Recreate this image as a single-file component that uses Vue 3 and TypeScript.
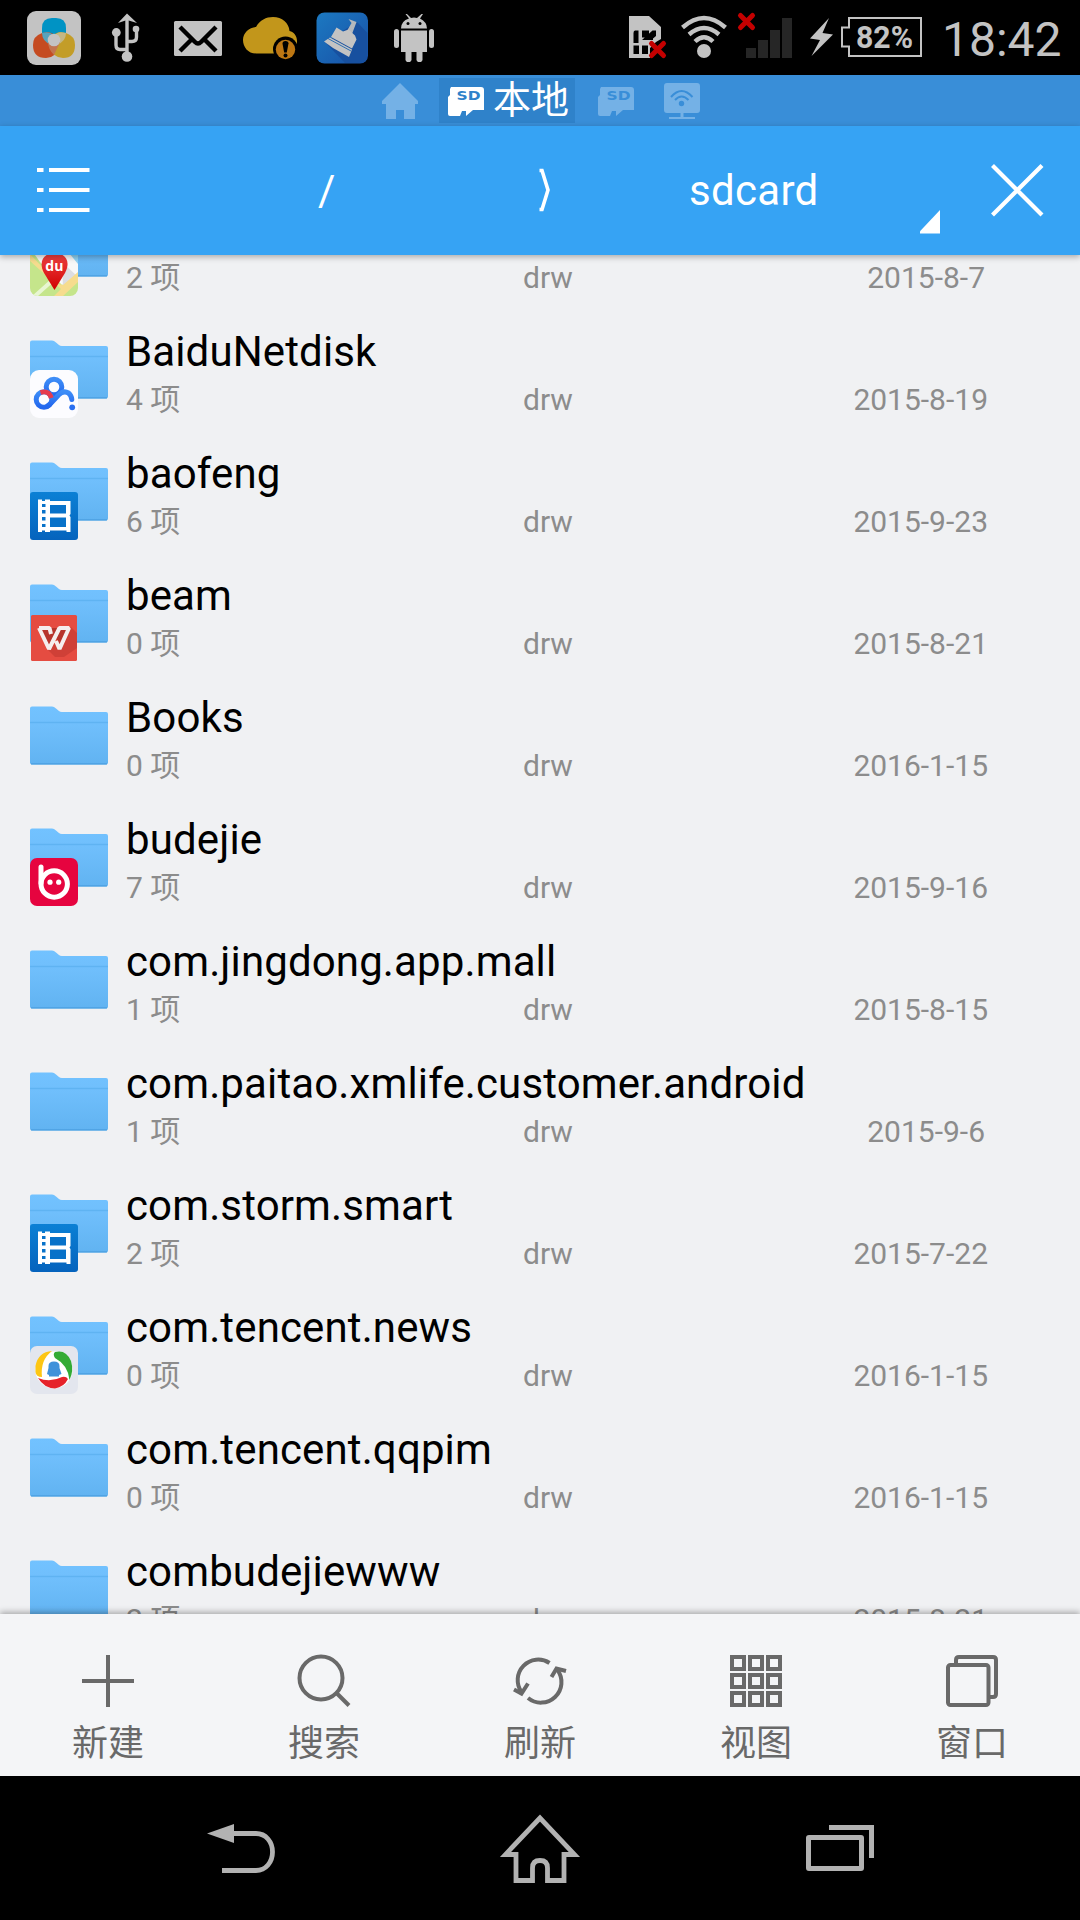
<script setup lang="ts">
type AppIcon = 'map' | 'disk' | 'film' | 'wps' | 'bude' | 'news'

interface Entry {
  name: string
  count: number
  date: string
  icon?: AppIcon
}

interface Tool {
  id: string
  label: string
}

const entries: Entry[] = [
  { name: '', count: 2, date: '2015-8-7', icon: 'map' },
  { name: 'BaiduNetdisk', count: 4, date: '2015-8-19', icon: 'disk' },
  { name: 'baofeng', count: 6, date: '2015-9-23', icon: 'film' },
  { name: 'beam', count: 0, date: '2015-8-21', icon: 'wps' },
  { name: 'Books', count: 0, date: '2016-1-15' },
  { name: 'budejie', count: 7, date: '2015-9-16', icon: 'bude' },
  { name: 'com.jingdong.app.mall', count: 1, date: '2015-8-15' },
  { name: 'com.paitao.xmlife.customer.android', count: 1, date: '2015-9-6' },
  { name: 'com.storm.smart', count: 2, date: '2015-7-22', icon: 'film' },
  { name: 'com.tencent.news', count: 0, date: '2016-1-15', icon: 'news' },
  { name: 'com.tencent.qqpim', count: 0, date: '2016-1-15' },
  { name: 'combudejiewww', count: 2, date: '2015-8-21' },
]

const tools: Tool[] = [
  { id: 'new', label: '新建' },
  { id: 'search', label: '搜索' },
  { id: 'refresh', label: '刷新' },
  { id: 'view', label: '视图' },
  { id: 'window', label: '窗口' },
]

const cells = [0, 1, 2, 3, 4, 5, 6, 7, 8]
</script>

<template>
  <div class="screen">
    <header class="status">
      <svg class="first" width="75" height="75" viewBox="20 0 75 75">
        <rect x="27" y="11" width="54" height="54" rx="9" fill="#c3c3c3" />
        <path d="M42 28q0-10 10-10h4q10 0 10 10v4q0 10-10 10h-4q-10 0-10-10z" fill="#0093c4" />
        <path d="M42 33q-9 3-9 12q0 13 13 13q10 0 13-12q0-12-11-14z" fill="#c54b21" />
        <path d="M66 33q9 3 9 12q0 13-12 13q-10 0-14-12q0-12 11-14z" fill="#c39d28" />
        <path d="M42 33q12-3 12 7l-3 5q-9-4-9-12z" fill="#57a3bd" />
        <path d="M66 33q-12-3-12 7l3 5q9-4 9-12z" fill="#c4b784" />
        <path d="M48 42h12l-6 13q-6-6-6-13z" fill="#c27450" />
        <circle cx="54" cy="40" r="6.3" fill="#c3c3c3" />
      </svg>
      <svg width="60" height="75" viewBox="95 0 60 75" fill="none" stroke="#c3c3c3" stroke-width="3.400">
        <path d="M127 56V20M127 49.500H120Q116 49.500 116 45V33M127 41.500H132Q136.500 41.500 136.500 37V29" />
        <path d="M127 13.500L137 23L127 20L118 23z" fill="#c3c3c3" stroke="none" />
        <g fill="#c3c3c3" stroke="none">
          <circle cx="127" cy="56.500" r="5.300" />
          <circle cx="116.300" cy="32.500" r="4.400" />
          <circle cx="136" cy="29" r="3.300" />
        </g>
      </svg>
      <svg width="80" height="75" viewBox="155 0 80 75">
        <rect x="174" y="21" width="48" height="35" rx="1.500" fill="#c3c3c3" />
        <path d="M180 27L195 42Q198 45 201 42L216 27M180 51L191 40M216 51L205 40" fill="none" stroke="#000" stroke-width="4.400" />
      </svg>
      <svg width="70" height="75" viewBox="235 0 70 75">
        <path d="M256 53.500C248 53.500 243 47 243 40C243 33 249 27.500 256 27C260 20 266 17 273 17C282 17 289 23 289.500 31C294 32 297 36 297 41V53.500z" fill="#c2961b" />
        <circle cx="285.500" cy="49" r="12.500" fill="#000" />
        <circle cx="285.500" cy="49.500" r="9.700" fill="#bd7713" />
        <path d="M282.500 43.500q0-2.500 3-2.500t3 2.500l-1.700 9h-2.600z" fill="#000" />
        <circle cx="285.500" cy="55.500" r="2" fill="#000" />
      </svg>
      <svg width="75" height="75" viewBox="305 0 75 75">
        <defs>
          <linearGradient id="brush" x1="0" y1="0" x2="1" y2="1">
            <stop offset="0" stop-color="#1c79c1" />
            <stop offset="1" stop-color="#1850a6" />
          </linearGradient>
        </defs>
        <rect x="316.500" y="12.500" width="51.500" height="51" rx="8" fill="url(#brush)" />
        <path d="M357 22L367.500 33V55Q367 63 360 63H345L325 42z" fill="#17509f" />
        <path d="M347.500 30L351.500 23L348.500 19L356.500 22L352 34z" fill="#b4b8bd" />
        <path d="M336.500 27.500L343 31.500L348.500 29.500L355 35.500L356.500 39.500L352 48.500L331 37z" fill="#c3c3c3" />
        <path d="M330 37.500L352 49.500L349 57L341 52.500L333 48L324 41.500z" fill="#c3c3c3" />
        <path d="M328 38.500L351 51" stroke="#1b65b1" stroke-width="0.900" />
      </svg>
      <svg width="65" height="75" viewBox="380 0 65 75" fill="#c3c3c3">
        <path d="M401 28.500Q401 21 409 18.500L405.500 14H407L411 18Q414 17 417 18L421.500 14H423L420 18.500Q427 22 427 28.500z" />
        <path d="M401 30.500H427V52H401z" />
        <rect x="394" y="29" width="5" height="19" rx="2.500" />
        <rect x="429" y="29" width="5" height="19" rx="2.500" />
        <rect x="405.500" y="45" width="6" height="17" rx="2.800" />
        <rect x="416.500" y="45" width="6" height="17" rx="2.800" />
        <circle cx="408" cy="23.500" r="1.500" fill="#000" />
        <circle cx="420" cy="23.500" r="1.500" fill="#000" />
      </svg>
      <span class="grow"></span>
      <svg width="55" height="75" viewBox="615 0 55 75">
        <path d="M629 16H649L661 27V39L656 42L650 48V58H629z" fill="#c3c3c3" />
        <path d="M638.500 30.500H635Q633.500 30.500 633.500 33V43H638.500zM642 30.500H649V37.500H642zM652.500 30.500H656V36L653 38.500V40H642M633.500 45.500H639V54H633.500zM642 45.500H648V54H642z" fill="#000" />
        <path d="M651.500 43.500L663.500 55.500M663.500 43.500L651.500 55.500" stroke="#c40000" stroke-width="5" stroke-linecap="round" />
      </svg>
      <svg width="62" height="75" viewBox="670 0 62 75" fill="none" stroke="#c3c3c3" stroke-width="4.400">
        <path d="M682.500 27.500Q704 8.500 725.500 27.500M689 34.500Q704 21.500 719 34.500M695 41.500Q704 33 713 41.500" />
        <circle cx="704" cy="51" r="7" fill="#c3c3c3" stroke="none" />
      </svg>
      <svg width="68" height="75" viewBox="732 0 68 75" fill="#262626">
        <path d="M746 48h10v10h-10zM758 40h10v18h-10zM770 30h10v28h-10zM782 18h10v40h-10z" />
        <path d="M740.500 15.500L752.500 27.500M752.500 15.500L740.500 27.500" stroke="#c40000" stroke-width="5" stroke-linecap="round" />
      </svg>
      <svg width="38" height="75" viewBox="800 0 38 75">
        <path d="M829 18L810 38.500L820 40L811.500 56L833 34.500L822.500 33z" fill="#c3c3c3" />
      </svg>
      <svg width="87" height="75" viewBox="838 0 87 75">
        <path d="M849 18H921V56H849V46.500H842V27.500H849z" fill="none" stroke="#c3c3c3" stroke-width="2" />
        <text x="856" y="48" textLength="57" lengthAdjust="spacingAndGlyphs" class="pct">82%</text>
      </svg>
      <span class="clock">18:42</span>
    </header>

    <nav class="tabs">
      <svg width="36" height="36" viewBox="0 0 36 36" fill="#74b1e6">
        <path d="M18 0L36 18V21H33V36H22V27H14V36H4V21H0V18z" />
      </svg>
      <div class="tab-on">
        <svg width="37" height="29" viewBox="0 0 37 29">
          <path d="M3 0H33Q36 0 36 3V23H25L18 29V24H14L12 29H2Q0 29 0 27V10L2 8V2z" fill="#fff" />
          <text x="8.500" y="12.500" textLength="24" lengthAdjust="spacingAndGlyphs" class="sd-text on">SD</text>
        </svg>
        <span>本地</span>
      </div>
      <svg class="sd" width="37" height="29" viewBox="0 0 37 29">
        <path d="M3 0H33Q36 0 36 3V23H25L18 29V24H14L12 29H2Q0 29 0 27V10L2 8V2z" fill="#74b1e6" />
        <text x="8.500" y="12.500" textLength="24" lengthAdjust="spacingAndGlyphs" class="sd-text">SD</text>
      </svg>
      <svg class="net" width="36" height="36" viewBox="0 0 36 36">
        <path d="M3 0H33Q36 0 36 3V27Q36 30 33 30H19.500V34H31V36H5V34H16.500V30H3Q0 30 0 27V3Q0 0 3 0z" fill="#74b1e6" />
        <path d="M7 14Q17.500 2 28.500 14M11 17Q17.500 10 24.500 17" fill="none" stroke="#398ed8" stroke-width="2" />
        <circle cx="17.500" cy="20.500" r="2.700" fill="#398ed8" />
      </svg>
    </nav>

    <div class="crumbs">
      <svg width="140" height="129" viewBox="0 126 140 129" stroke="#fff" stroke-width="4">
        <path d="M37 170h6.500M49 170h40.500M37 190h6.500M49 190h40.500M37 210h6.500M49 210h40.500" />
      </svg>
      <span class="root">/</span>
      <svg width="20" height="129" viewBox="535 126 20 129" fill="none" stroke="#fff" stroke-width="3.600">
        <path d="M539.500 170.500H542L548 190L542 209.500H539.500" />
      </svg>
      <span class="folder-name">sdcard</span>
      <svg width="160" height="129" viewBox="920 126 160 129">
        <path d="M940 210V233.500H918z" fill="#fff" />
        <path d="M992.500 165.500L1042 215M1042 165.500L992.500 215" stroke="#fff" stroke-width="4.200" />
      </svg>
    </div>

    <main class="list">
      <article v-for="(e, i) in entries" :key="i" class="row">
        <div class="thumb">
          <svg width="78" height="59" viewBox="0 0 78 59">
            <defs>
              <linearGradient id="folder" x1="0" y1="0" x2="0" y2="1">
                <stop offset="0" stop-color="#72c2ff" />
                <stop offset="0.3" stop-color="#70bffc" />
                <stop offset="1" stop-color="#61b3f1" />
              </linearGradient>
            </defs>
            <path d="M2 0.500H22Q24 0.500 26 2.500L29 5Q30 6 32 6H76Q78 6 78 8V56.500Q78 58.500 76 58.500H2Q0 58.500 0 56.500V2.500Q0 0.500 2 0.500z" fill="url(#folder)" />
            <path d="M0 16.500H78" stroke="#5fb3f2" stroke-width="1.600" />
            <path d="M1 57.800H77" stroke="#4b9fe0" stroke-width="1.300" />
          </svg>
          <svg v-if="e.icon" class="badge" width="48" height="48" viewBox="0 0 48 48">
            <defs>
              <linearGradient id="blue" x1="0" y1="0" x2="0" y2="1">
                <stop offset="0" stop-color="#0b80d5" />
                <stop offset="1" stop-color="#0563bd" />
              </linearGradient>
              <linearGradient id="pan" x1="0" y1="0" x2="0" y2="1">
                <stop offset="0" stop-color="#3d8df7" />
                <stop offset="1" stop-color="#2468ee" />
              </linearGradient>
              <linearGradient id="pin" x1="0" y1="0" x2="0" y2="1">
                <stop offset="0" stop-color="#f04343" />
                <stop offset="1" stop-color="#d00000" />
              </linearGradient>
              <clipPath id="tile"><rect width="48" height="48" rx="8" /></clipPath>
            </defs>
            <g v-if="e.icon === 'map'" clip-path="url(#tile)">
              <rect width="48" height="48" fill="#c5e58b" />
              <path d="M0 0H48V27L32 37L10 14z" fill="#f8f8f8" />
              <path d="M32 14L48 29L33 40z" fill="#dcdde2" />
              <path d="M35 0H48V16z" fill="#8fd3f5" />
              <path d="M0 6L28 36L33 37L48 24V34L33 48H24L31 41L0 13z" fill="#f6dc8e" />
              <path d="M5 48L24 31" stroke="#e8f6d2" stroke-width="4" />
              <path d="M24.500 42L14 25C8 13 14 5 24.500 5C36 5 41 14 35 25z" fill="url(#pin)" />
              <text x="24.300" y="23" class="du">du</text>
            </g>
            <g v-else-if="e.icon === 'disk'">
              <rect width="48" height="48" rx="9" fill="#fcfcff" />
              <g fill="none" stroke="url(#pan)" stroke-width="5">
                <circle cx="24" cy="17" r="7.800" />
                <circle cx="14" cy="29.500" r="7.800" />
                <path d="M17.500 36Q20 34.500 28.500 25Q33.500 20 38.500 23Q41.500 25.500 41.800 29.500" stroke-linecap="round" />
              </g>
              <path d="M10.500 22.500Q19 20 21.300 28" fill="none" stroke="#e63b4e" stroke-width="4.800" />
              <circle cx="42.200" cy="37.300" r="2.900" fill="#2a70f0" />
            </g>
            <g v-else-if="e.icon === 'film'">
              <rect width="48" height="48" rx="3" fill="url(#blue)" />
              <path d="M8 7.500H12V9H15V7.500H20V9H40.500V22L39.500 23.500L40.500 25V40H36.500V38.500H20V40H15V38.500H12V40H8z" fill="#fff" />
              <path d="M12 12h3.500v3H12zM12 18h3.500v3.500H12zM12 25h3.500v3.500H12zM12 32h3.500v3H12zM20 13H36V21.500H20zM20 25.500H36V35H20z" fill="#0872c9" />
            </g>
            <g v-else-if="e.icon === 'wps'">
              <rect x="1" y="1" width="46" height="46" rx="1.500" fill="#e54c41" />
              <path d="M41 13L47 19V34L34 43H25L18 36z" fill="#cf4037" />
              <path d="M9 14L19 35L26 23L29 35L39 14z" fill="#b7342c" />
              <path d="M9 14H19.500L21 20M9 14L19 35L29.500 14H39L29.500 35L26 27" fill="none" stroke="#f5eeee" stroke-width="4" stroke-linejoin="bevel" />
            </g>
            <g v-else-if="e.icon === 'bude'">
              <rect width="48" height="48" rx="7" fill="#e6043f" />
              <path d="M11 9V25" stroke="#fff" stroke-width="5" stroke-linecap="round" />
              <circle cx="24.200" cy="26" r="13.200" fill="none" stroke="#fff" stroke-width="5" />
              <circle cx="20" cy="24.200" r="2.600" fill="#fff" />
              <circle cx="28.700" cy="24.200" r="2.600" fill="#fff" />
            </g>
            <g v-else>
              <rect width="48" height="48" rx="7" fill="#e3e6ee" />
              <circle cx="24" cy="24" r="18.500" fill="#fff" />
              <path d="M22 5Q8 6 5.500 20V26Q6 31 12 31Q10 14 22 5z" fill="#fdc615" />
              <path d="M25 6Q36 3 41 15Q44 25 39.500 34Q38 19 25 12Q22.500 8 25 6z" fill="#33ab35" />
              <path d="M8 32Q20 37 32 31Q36 30 38 33Q34 41 25 42.500Q14 42 8 32z" fill="#e6222a" />
              <path d="M18.500 20Q18.500 15.500 24 15.500Q29.500 15.500 29.500 20V22L31.500 28L29 29V30.500H19V29L17 28L18.500 22z" fill="#3f92da" />
            </g>
          </svg>
        </div>
        <div class="body">
          <div class="name">{{ e.name }}</div>
          <div class="meta">
            <span class="count">{{ e.count }} 项</span>
            <span class="perm">drw</span>
            <span class="date" :class="{ short: e.date.length < 9 }">{{ e.date }}</span>
          </div>
        </div>
      </article>
    </main>

    <footer class="toolbar">
      <div v-for="t in tools" :key="t.id" class="tool">
        <svg width="60" height="60" viewBox="0 0 60 60" fill="none" stroke="#696969" stroke-width="4">
          <path v-if="t.id === 'new'" d="M30 4V56M4 30H56" />
          <g v-else-if="t.id === 'search'">
            <circle cx="27" cy="27" r="21.500" />
            <path d="M43 42.500L55 54.500" />
          </g>
          <g v-else-if="t.id === 'refresh'">
            <path d="M39.500 12A20.500 20.500 0 0 0 11.500 41M18 47A20.500 20.500 0 0 0 47.500 19" />
            <path d="M4 38.500L11.500 42.500L18 32.500M41.500 26L46.500 17.500L56 20" />
          </g>
          <g v-else-if="t.id === 'view'">
            <rect v-for="c in cells" :key="c" :x="6 + (c % 3) * 18" :y="6 + Math.floor(c / 3) * 18" width="12" height="12" />
          </g>
          <g v-else>
            <rect x="6" y="14" width="40.500" height="40" rx="2.500" />
            <path d="M14 13V9Q14 6 17 6H51Q54 6 54 9V43Q54 46 51 46H47" />
          </g>
        </svg>
        <span>{{ t.label }}</span>
      </div>
    </footer>

    <footer class="sysnav">
      <svg width="75" height="144" viewBox="204 1776 75 144">
        <path d="M207 1833.500L234 1824V1843z" fill="#b2b2b2" />
        <path d="M232 1833.500H256C266 1833.500 272.500 1842 272.500 1852C272.500 1862 266 1870.500 256 1870.500H222" fill="none" stroke="#b2b2b2" stroke-width="4.800" />
      </svg>
      <svg width="84" height="144" viewBox="498 1776 84 144" fill="none" stroke="#b2b2b2" stroke-width="4.800">
        <path d="M540 1818L505.500 1854.500H516V1880.500H532.500V1868Q532.500 1860.500 540 1860.500Q547.500 1860.500 547.500 1868V1880.500H564V1854.500H574.500z" />
      </svg>
      <svg width="75" height="144" viewBox="801 1776 75 144" fill="none" stroke="#b2b2b2" stroke-width="5">
        <rect x="808.500" y="1837.500" width="53" height="31" rx="0.500" />
        <path d="M829 1827.500H871.500V1858" />
      </svg>
    </footer>
  </div>
</template>

<style>
body {
  margin: 0;
  background: #000;
}
</style>

<style scoped>
.screen {
  width: 1080px;
  height: 1920px;
  display: flex;
  flex-direction: column;
  overflow: hidden;
  background: #f0f1f3;
  font-family: Roboto, 'Noto Sans CJK SC', sans-serif;
}
svg {
  display: block;
  flex: none;
}
.status {
  height: 75px;
  flex: none;
  display: flex;
  background: #000;
}
.first {
  margin-left: 20px;
}
.grow {
  flex: 1;
}
.pct {
  font-size: 31px;
  font-weight: 700;
  fill: #c3c3c3;
}
.clock {
  width: 155px;
  box-sizing: border-box;
  padding-left: 17px;
  font-size: 48px;
  line-height: 79px;
  color: #c3c3c3;
}
.tabs {
  height: 51px;
  flex: none;
  display: flex;
  background: #398ed8;
}
.tabs > svg:first-child {
  margin: 8px 0 0 382px;
}
.tab-on {
  margin: 3px 0 0 21px;
  width: 136px;
  height: 45px;
  display: flex;
  background: #2f82ca;
  color: #fff;
  font-size: 38px;
  line-height: 44px;
}
.tab-on svg {
  margin: 9px 8px 0 9px;
}
.sd-text {
  font: 700 12.5px 'DejaVu Sans', sans-serif;
  fill: #398ed8;
}
.sd-text.on {
  fill: #2f82ca;
}
.sd {
  margin: 12px 29px 0 23px;
}
.net {
  margin-top: 8px;
}
.crumbs {
  position: relative;
  z-index: 1;
  height: 129px;
  flex: none;
  display: flex;
  background: #36a3f4;
  box-shadow: 0 2px 6px rgba(0, 0, 0, 0.3);
  color: #fff;
  font-size: 42px;
  letter-spacing: 0.3px;
  line-height: 130px;
}
.root {
  width: 395px;
  text-indent: 178px;
}
.folder-name {
  width: 365px;
  text-indent: 134px;
}
.list {
  height: 1359px;
  flex: none;
  overflow: hidden;
}
.row {
  height: 122px;
  display: flex;
}
.row:first-child {
  margin-top: -55px;
}
.thumb {
  position: relative;
  flex: none;
  width: 78px;
  margin: 18px 18px 0 30px;
}
.badge {
  position: absolute;
  left: 0;
  top: 30px;
}
.du {
  font: 700 14px 'Open Sans', sans-serif;
  fill: #fff;
  text-anchor: middle;
}
.body {
  width: 862px;
  flex: none;
}
.name {
  height: 58px;
  font-size: 42px;
  letter-spacing: 0.13px;
  line-height: 60px;
  white-space: nowrap;
  color: #000;
}
.meta {
  display: flex;
  height: 40px;
  font-size: 30px;
  line-height: 40px;
  color: #8c8c8c;
}
.meta span {
  flex: none;
}
.count {
  width: 397px;
}
.perm {
  width: 270px;
}
.date {
  width: 195px;
  box-sizing: border-box;
  text-align: right;
}
.date.short {
  padding-right: 3px;
}
.toolbar {
  position: relative;
  z-index: 1;
  height: 162px;
  flex: none;
  display: flex;
  background: #f4f5f7;
  box-shadow: 0 -2px 6px rgba(0, 0, 0, 0.3);
}
.tool {
  width: 216px;
  display: flex;
  flex-direction: column;
  align-items: center;
  padding-top: 37px;
  font-size: 36px;
  line-height: 66px;
  color: #696969;
}
.sysnav {
  height: 144px;
  flex: none;
  display: flex;
  justify-content: space-between;
  padding: 0 204px;
  background: #000;
}
</style>
